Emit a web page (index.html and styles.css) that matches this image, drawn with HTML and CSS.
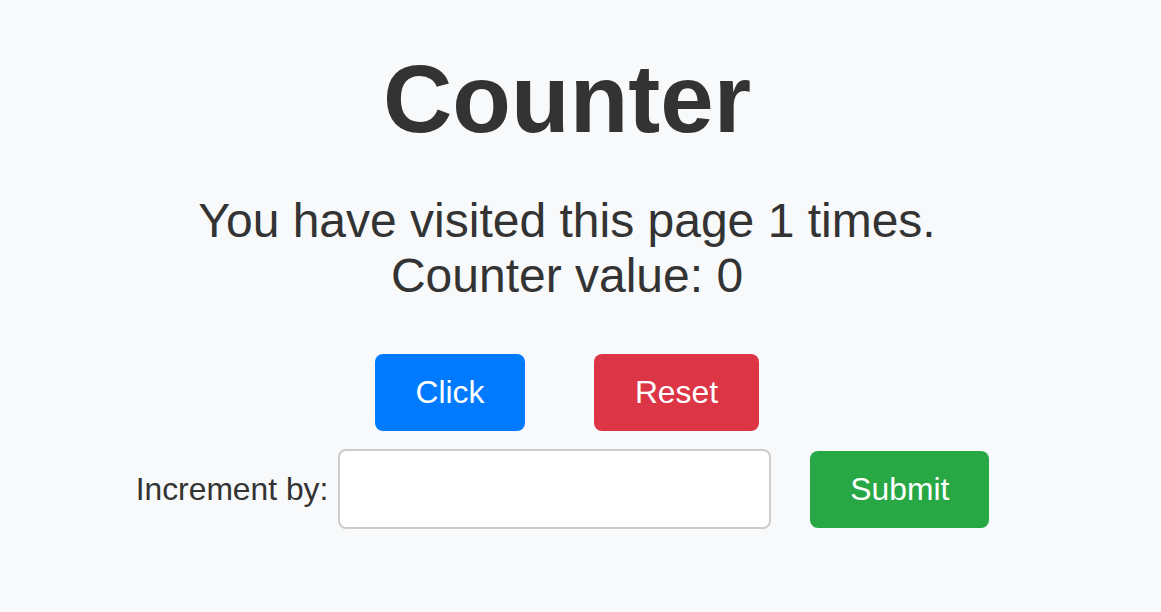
FILE: index.html
```html
<!DOCTYPE html>
<html lang="en">
<head>
<meta charset="utf-8">
<title>Counter</title>
<link rel="stylesheet" href="styles.css">
</head>
<body>
<main class="page">
  <h1 class="title">Counter</h1>
  <p class="info">You have visited this page 1 times.<br>Counter value: 0</p>
  <div class="actions">
    <button class="btn btn-blue" type="button">Click</button>
    <button class="btn btn-red" type="button">Reset</button>
  </div>
  <form class="form-row">
    <label class="label" for="inc">Increment by:</label>
    <input class="field" id="inc" type="text">
    <button class="btn btn-green" type="button">Submit</button>
  </form>
</main>
</body>
</html>
```

FILE: styles.css
```css
html, body {
  margin: 0;
  padding: 0;
  background: #f8f9fa;
}

body {
  font-family: "Liberation Sans", Arial, sans-serif;
  color: #333333;
  height: 612px;
  overflow: hidden;
}

.page {
  display: flex;
  flex-direction: column;
  align-items: center;
  padding: 44px 27px 0 0;
  text-align: center;
}

.title {
  margin: 0;
  font-size: 96px;
  line-height: 110px;
  font-weight: bold;
}

.info {
  margin: 39px 0 0;
  font-size: 48px;
  line-height: 55px;
}

.actions {
  display: flex;
  gap: 69px;
  margin-top: 51px;
}

.btn {
  font-family: "Liberation Sans", Arial, sans-serif;
  font-size: 31.8px;
  line-height: 37px;
  padding: 20px 40px;
  border: none;
  border-radius: 8px;
  color: #ffffff;
  cursor: pointer;
}

.btn-blue { background: #007bff; padding: 20px 40.5px; }
.btn-red { background: #dc3545; padding: 20px 41px; }
.btn-green { background: #28a745; }

.form-row {
  display: flex;
  align-items: center;
  margin-top: 18px;
  padding-right: 9px;
}

.label {
  font-size: 31.8px;
  line-height: 37px;
  margin-right: 10px;
}

.field {
  box-sizing: border-box;
  width: 433px;
  height: 80px;
  border: 2px solid #cccccc;
  border-radius: 8px;
  background: #ffffff;
  font-size: 31.8px;
  padding: 0 12px;
  margin-right: 39px;
}
```
